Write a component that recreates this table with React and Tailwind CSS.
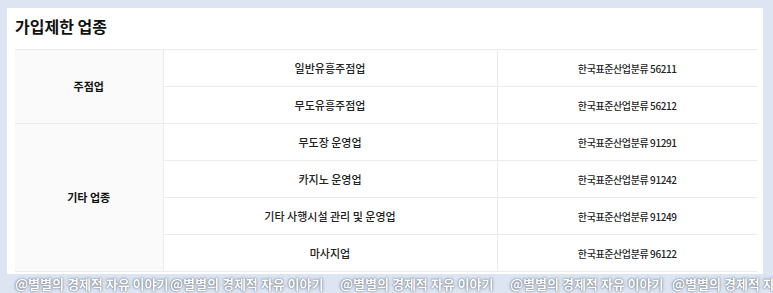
const rows = [
  { group: '주점업', span: 2, name: '일반유흥주점업', code: '한국표준산업분류 56211' },
  { name: '무도유흥주점업', code: '한국표준산업분류 56212' },
  { group: '기타 업종', span: 4, name: '무도장 운영업', code: '한국표준산업분류 91291' },
  { name: '카지노 운영업', code: '한국표준산업분류 91242' },
  { name: '기타 사행시설 관리 및 운영업', code: '한국표준산업분류 91249' },
  { name: '마사지업', code: '한국표준산업분류 96122' },
];

const marks = ['left-[15px]', 'left-[170px]', 'left-[340px]', 'left-[510px]', 'left-[672px]'];

export default function App() {
  return (
    <div
      className="relative w-[773px] h-[293px] overflow-hidden bg-[#dce5f1] pt-[8px] pl-[7px]"
      style={{ fontFamily: '"Noto Sans CJK KR", "Noto Sans", sans-serif' }}
    >
      <div className="w-[756px] h-[266px] bg-white px-[8px]">
        <h2 className="h-[41px] pt-[6px] text-[16px] font-bold leading-[24px] text-[#111]">
          가입제한 업종
        </h2>
        <table className="w-[742px] border-collapse text-[11px] text-[#222] table-fixed">
          <colgroup>
            <col className="w-[148px]" />
            <col className="w-[334px]" />
            <col />
          </colgroup>
          <tbody>
            {rows.map((r, i) => (
              <tr key={i} className="h-[37px]">
                {r.group ? (
                  <td
                    rowSpan={r.span}
                    className="border-y border-r border-[#ebebeb] bg-[#fafafa] text-center font-bold text-[#111]"
                  >
                    {r.group}
                  </td>
                ) : null}
                <td className="border border-[#ebebeb] text-center font-medium">{r.name}</td>
                <td className="border-y border-l border-[#ebebeb] text-center text-[10px] font-medium tracking-[-0.4px]">
                  {r.code}
                </td>
              </tr>
            ))}
          </tbody>
        </table>
      </div>
      {marks.map((m) => (
        <span
          key={m}
          className={`absolute top-[276px] ${m} whitespace-nowrap text-[13px] font-bold leading-[16px] text-white [text-shadow:0_0_1px_rgba(70,80,100,0.9),0_0_3px_rgba(70,80,100,0.6)]`}
        >
          @별별의 경제적 자유 이야기
        </span>
      ))}
    </div>
  );
}
